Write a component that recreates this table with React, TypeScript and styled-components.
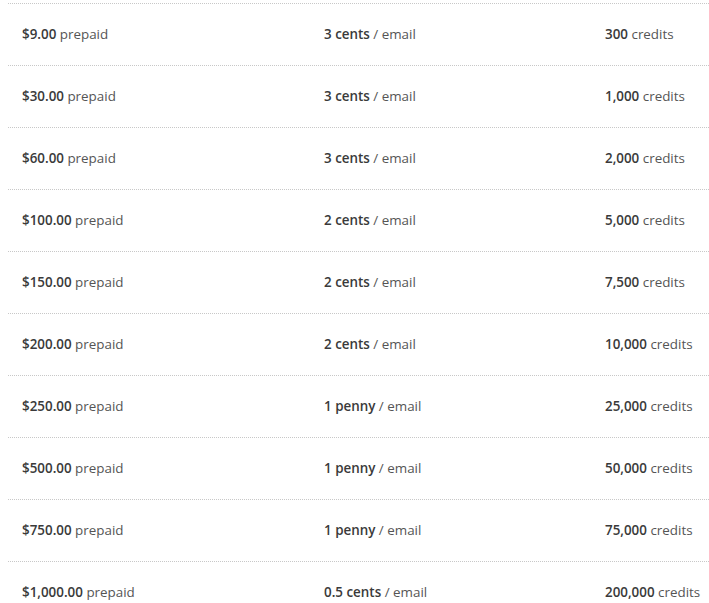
import React from 'react';
import styled, { createGlobalStyle } from 'styled-components';

const GlobalStyle = createGlobalStyle`
  html, body {
    margin: 0;
    padding: 0;
    background: #fff;
    overflow: hidden;
  }
  body {
    padding: 3px 0 0 8px;
    font-family: "Open Sans", "Liberation Sans", sans-serif;
  }
`;

interface Plan {
  price: string;
  rate: string;
  credits: string;
}

const plans: Plan[] = [
  { price: '$9.00', rate: '3 cents', credits: '300' },
  { price: '$30.00', rate: '3 cents', credits: '1,000' },
  { price: '$60.00', rate: '3 cents', credits: '2,000' },
  { price: '$100.00', rate: '2 cents', credits: '5,000' },
  { price: '$150.00', rate: '2 cents', credits: '7,500' },
  { price: '$200.00', rate: '2 cents', credits: '10,000' },
  { price: '$250.00', rate: '1 penny', credits: '25,000' },
  { price: '$500.00', rate: '1 penny', credits: '50,000' },
  { price: '$750.00', rate: '1 penny', credits: '75,000' },
  { price: '$1,000.00', rate: '0.5 cents', credits: '200,000' },
];

const Table = styled.div`
  width: 100%;
  display: flex;
  flex-direction: column;
`;

const Row = styled.div`
  display: grid;
  grid-template-columns: 302px 281px 1fr;
  height: 62px;
  box-sizing: border-box;
  border-top: 1px dotted #c8c8c8;
  align-items: center;
`;

const Cell = styled.div`
  padding: 0 0 2px 14px;
  font-size: 13.4px;
  color: #555;
  white-space: nowrap;
  line-height: 18px;
`;

const Strong = styled.strong`
  font-weight: 600;
  color: #3a3a3a;
`;

const App: React.FC = () => {
  return (
    <>
      <GlobalStyle />
      <Table>
        {plans.map(plan => (
          <Row key={plan.price}>
            <Cell>
              <Strong>{plan.price}</Strong> prepaid
            </Cell>
            <Cell>
              <Strong>{plan.rate}</Strong> / email
            </Cell>
            <Cell>
              <Strong>{plan.credits}</Strong> credits
            </Cell>
          </Row>
        ))}
      </Table>
    </>
  );
};

export default App;
